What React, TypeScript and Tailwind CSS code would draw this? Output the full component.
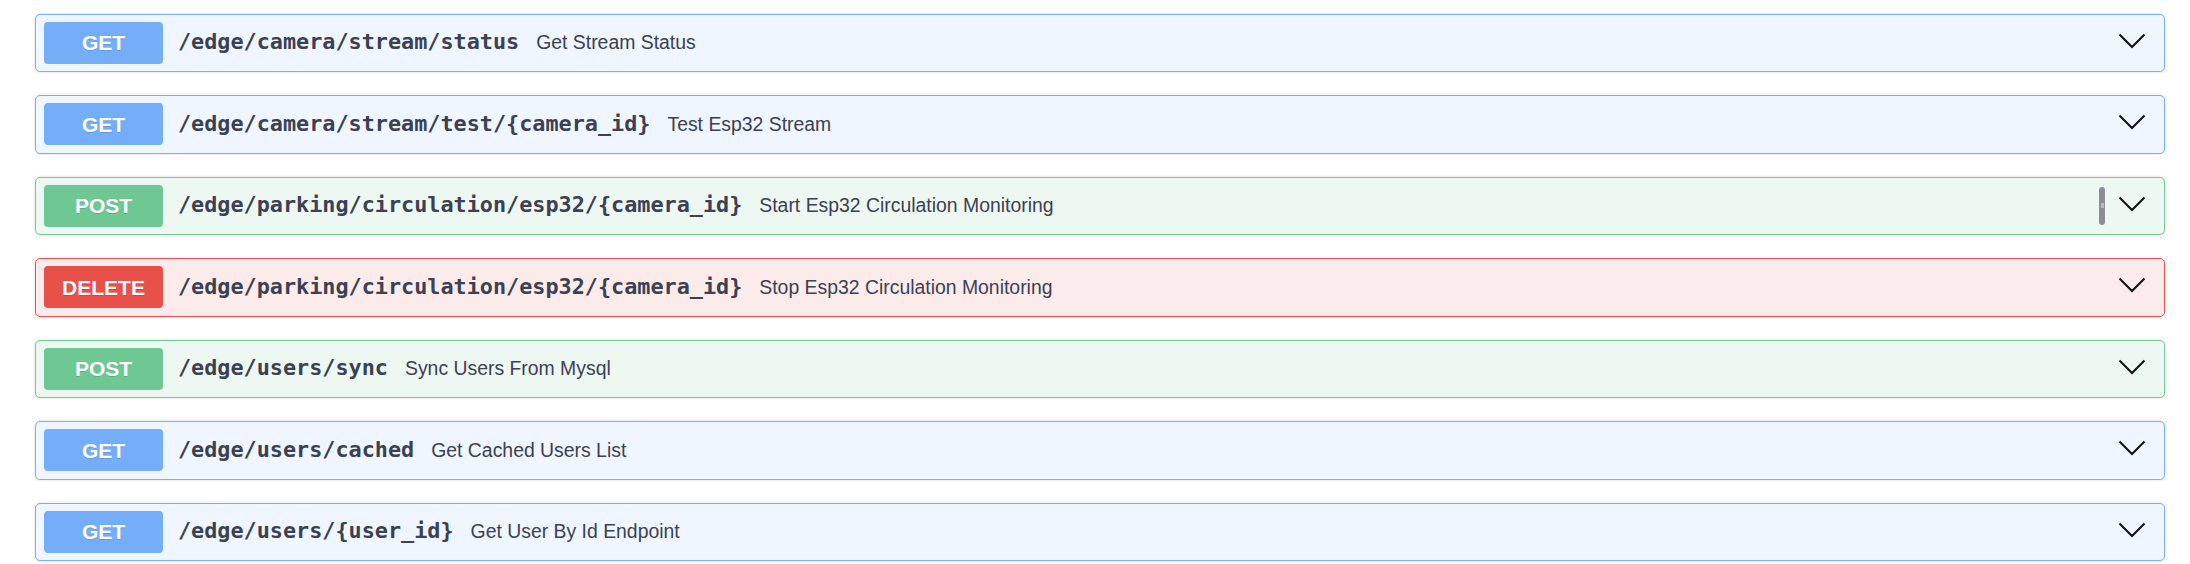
import React from "react";

type Method = "GET" | "POST" | "DELETE";

type Endpoint = {
  method: Method;
  path: string;
  summary: string;
  locked?: boolean;
};

const ENDPOINTS: Endpoint[] = [
  { method: "GET", path: "/edge/camera/stream/status", summary: "Get Stream Status" },
  { method: "GET", path: "/edge/camera/stream/test/{camera_id}", summary: "Test Esp32 Stream" },
  {
    method: "POST",
    path: "/edge/parking/circulation/esp32/{camera_id}",
    summary: "Start Esp32 Circulation Monitoring",
    locked: true,
  },
  {
    method: "DELETE",
    path: "/edge/parking/circulation/esp32/{camera_id}",
    summary: "Stop Esp32 Circulation Monitoring",
  },
  { method: "POST", path: "/edge/users/sync", summary: "Sync Users From Mysql" },
  { method: "GET", path: "/edge/users/cached", summary: "Get Cached Users List" },
  { method: "GET", path: "/edge/users/{user_id}", summary: "Get User By Id Endpoint" },
];

const STYLES: Record<Method, { row: string; badge: string }> = {
  GET: {
    row: "bg-[#eff6ff] border-[#79b1f9]",
    badge: "bg-[#74adf8]",
  },
  POST: {
    row: "bg-[#eef8f2] border-[#72cb95]",
    badge: "bg-[#6fc894]",
  },
  DELETE: {
    row: "bg-[#fcebeb] border-[#e8544e]",
    badge: "bg-[#e8504a]",
  },
};

function Chevron() {
  return (
    <svg width="28" height="16" viewBox="0 0 28 16" className="mb-1" fill="none">
      <path d="M1.5 1.5 L14 14 L26.5 1.5" stroke="#111" strokeWidth="2" />
    </svg>
  );
}

function EndpointRow({ ep }: { ep: Endpoint }) {
  const s = STYLES[ep.method];
  return (
    <div
      className={`flex h-[58.5px] items-center rounded-[5px] border px-2 shadow-[0_0_3px_rgba(0,0,0,0.16)] ${s.row}`}
    >
      <span
        className={`flex h-[42px] w-[119px] shrink-0 items-center justify-center rounded-[4px] text-[21px] font-bold text-white [text-shadow:0_1px_0_rgba(0,0,0,0.12)] ${s.badge}`}
        style={{ fontFamily: '"Liberation Sans", Arial, sans-serif' }}
      >
        {ep.method}
      </span>
      <span
        className="ml-[15px] text-[21.8px] font-bold text-[#3b4151]"
        style={{ fontFamily: '"DejaVu Sans Mono", monospace' }}
      >
        {ep.path}
      </span>
      <span
        className="ml-[17px] text-[19.4px] text-[#3b4151]"
        style={{ fontFamily: '"Liberation Sans", Arial, sans-serif' }}
      >
        {ep.summary}
      </span>
      <div className="ml-auto flex items-center gap-[13px] pr-[10px]">
        {ep.locked && (
          <span className="flex h-[38px] w-[6px] items-center justify-center rounded-full bg-[#8b8d98]">
            <span className="h-[5px] w-[3px] bg-[#b9bbc3]" />
          </span>
        )}
        <Chevron />
      </div>
    </div>
  );
}

export default function App() {
  return (
    <main className="min-h-screen bg-white pl-[35px] pr-[25px] pt-[13.5px]">
      <div className="flex flex-col gap-[23px]">
        {ENDPOINTS.map((ep, i) => (
          <EndpointRow key={i} ep={ep} />
        ))}
      </div>
    </main>
  );
}
